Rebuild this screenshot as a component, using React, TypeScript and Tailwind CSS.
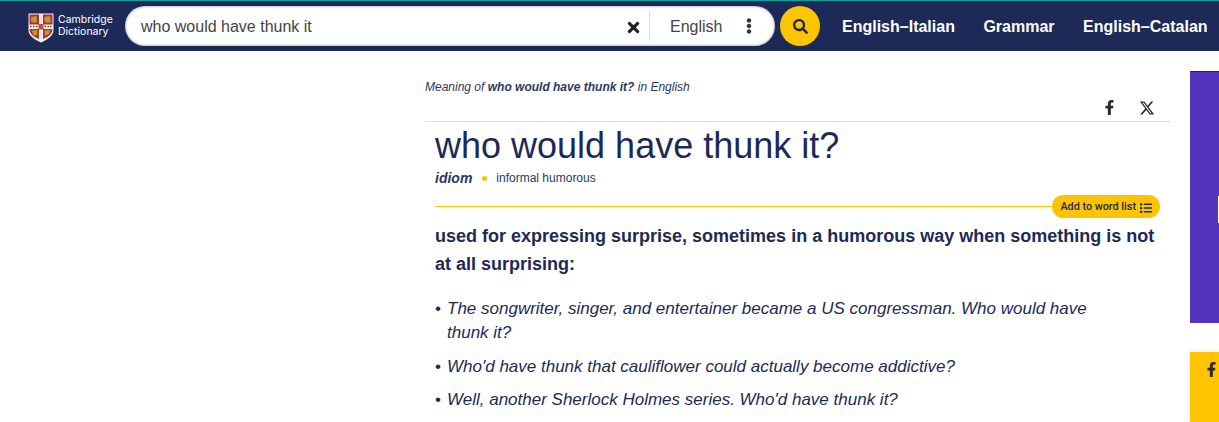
import React from "react";
import { FaFacebookF, FaTimes, FaSearch, FaEllipsisV, FaList } from "react-icons/fa";
import { FaXTwitter } from "react-icons/fa6";

const navLinks = ["English–Italian", "Grammar", "English–Catalan"];

const examples = [
  "The songwriter, singer, and entertainer became a US congressman. Who would have thunk it?",
  "Who'd have thunk that cauliflower could actually become addictive?",
  "Well, another Sherlock Holmes series. Who'd have thunk it?",
];

// simplified college arms, drawn small
const Shield = () => (
  <svg width="26" height="30" viewBox="0 0 26 30" className="mt-[3px] shrink-0">
    <path d="M0.5 0.5H25.5V17C25.5 23 19 27 13 29.5C7 27 0.5 23 0.5 17Z" fill="#f4f1ea" />
    <rect x="1.5" y="1.5" width="9.5" height="10" fill="#b0303a" />
    <rect x="15" y="1.5" width="9.5" height="10" fill="#b0303a" />
    <path d="M1.5 16H11V26C7 24.5 1.5 21.5 1.5 16Z" fill="#b0303a" />
    <path d="M15 16H24.5C24.5 21.5 19 24.5 15 26Z" fill="#b0303a" />
    <path d="M3 4L8.5 3L9 9L6 10L3 8Z" fill="#b79a34" />
    <path d="M16.5 4L22 3L23 9L19 10L16.5 8Z" fill="#b79a34" />
    <path d="M3.5 17.5L9 17L9.5 22L6 22.5Z" fill="#b79a34" />
    <path d="M16.5 17.5L22 17L21 21L17 23Z" fill="#b79a34" />
    <path d="M2 13.5h1.5M5 13.5h1.5M8 13.5h1.5M16.5 13.5h1.5M19.5 13.5h1.5M22 13.5h1.5" stroke="#444" strokeWidth="1.5" />
    <rect x="10.5" y="11" width="5" height="5.5" fill="#b4562f" />
    <path d="M13 2v7M13 19v6" stroke="#d9d4c8" strokeWidth="1" />
  </svg>
);

export default function App() {
  return (
    <div className="h-[422px] overflow-hidden bg-white font-['Liberation_Sans',Arial,sans-serif] text-[#1d2a57]">
      <header className="flex h-[51px] items-start overflow-hidden whitespace-nowrap border-t border-[#00a79d] bg-[#1d2a57] pl-[28px] pt-[5px]">
        <div className="flex h-[40px] w-[97px] shrink-0 items-center gap-[4px]">
          <Shield />
          <div className="font-['Inter',sans-serif] text-[10.5px] leading-[12px] text-white">
            <div>Cambridge</div>
            <div>Dictionary</div>
          </div>
        </div>
        <div className="flex h-[40px] w-[650px] shrink-0 items-center rounded-[20px] bg-white pl-[16px] shadow-[inset_0_0_3px_rgba(0,0,0,0.5)]">
          <span className="mt-[1px] flex-1 text-[16px] text-[#444]">who would have thunk it</span>
          <FaTimes className="mr-[7px] mt-[2px] text-[17px] text-[#222]" />
          <div className="flex h-[30px] w-[126px] items-center border-l border-[#ddd] pl-[20px]">
            <span className="mt-[1px] w-[71px] text-[16px] text-[#444]">English</span>
            <FaEllipsisV className="text-[16px] text-[#333]" />
          </div>
        </div>
        <div className="ml-[5px] flex h-[40px] w-[40px] shrink-0 items-center justify-center rounded-full bg-[#fec400]">
          <FaSearch className="text-[15px] text-[#1d2a57]" />
        </div>
        <nav className="ml-[22px] flex h-[40px] items-center gap-[28.5px] pt-[1px] text-[16px] font-bold text-white">
          {navLinks.map((link) => (
            <span key={link}>{link}</span>
          ))}
        </nav>
      </header>

      <main className="flex">
        <div className="w-[425px] shrink-0" />

        <article className="w-[745px] shrink-0 pt-[28px]">
          <p className="text-[12px] italic leading-[16px] text-[#2c3763]">
            Meaning of <b>who would have thunk it?</b> in English
          </p>
          <div className="flex h-[26px] items-start justify-end gap-[22px] pr-[15px] pt-[3px] text-[#292929]">
            <FaFacebookF className="mt-[2px] text-[15px]" />
            <FaXTwitter className="mt-[2px] text-[16px]" />
          </div>
          <div className="border-t border-[#dddddd] px-[10px] pt-[1px]">
            <h1 className="text-[36px] font-normal leading-[46px]">who would have thunk it?</h1>
            <div className="flex h-[18px] items-center leading-[18px]">
              <span className="text-[14px] font-bold italic text-[#2c3763]">idiom</span>
              <span className="ml-[10px] h-[5px] w-[5px] rounded-full bg-[#fec400]" />
              <span className="ml-[9px] text-[12px] text-[#2c3763]">informal humorous</span>
            </div>
            <div className="mt-[8px] flex h-[23px] items-center">
              <div className="flex-1 border-t border-[#fec400]" />
              <div className="flex h-[23px] items-center gap-[4px] rounded-full bg-[#fec400] pl-[8px] pr-[8px] pt-[2px] font-['Roboto',sans-serif] text-[10.8px] font-medium text-[#1d2a57]">
                Add to word list
                <FaList className="text-[12px]" />
              </div>
            </div>
            <p className="mt-[4px] text-[18px] font-bold leading-[28px]">
              used for expressing surprise, sometimes in a humorous way when something is not at all surprising:
            </p>
            <ul className="mt-[19px] text-[17px] italic leading-[24px]">
              {examples.map((text) => (
                <li key={text} className="mb-[9.5px] flex">
                  <span className="w-[12px] shrink-0 not-italic">•</span>
                  <span className="w-[660px]">{text}</span>
                </li>
              ))}
            </ul>
          </div>
        </article>

        <aside className="ml-[20px] flex flex-1 flex-col pt-[20px]">
          <div className="relative h-[252px] border-t border-[#2b2357] bg-[#5433bf]">
            <div className="absolute right-0 top-[124px] h-[27px] w-[1px] bg-white" />
          </div>
          <div className="mt-[29px] h-[70px] bg-[#fec400] pl-[14px] pt-[10px] text-[#292929] shadow-[0_0_6px_rgba(0,0,0,0.1)]">
            <FaFacebookF className="text-[15px]" />
          </div>
        </aside>
      </main>
    </div>
  );
}
